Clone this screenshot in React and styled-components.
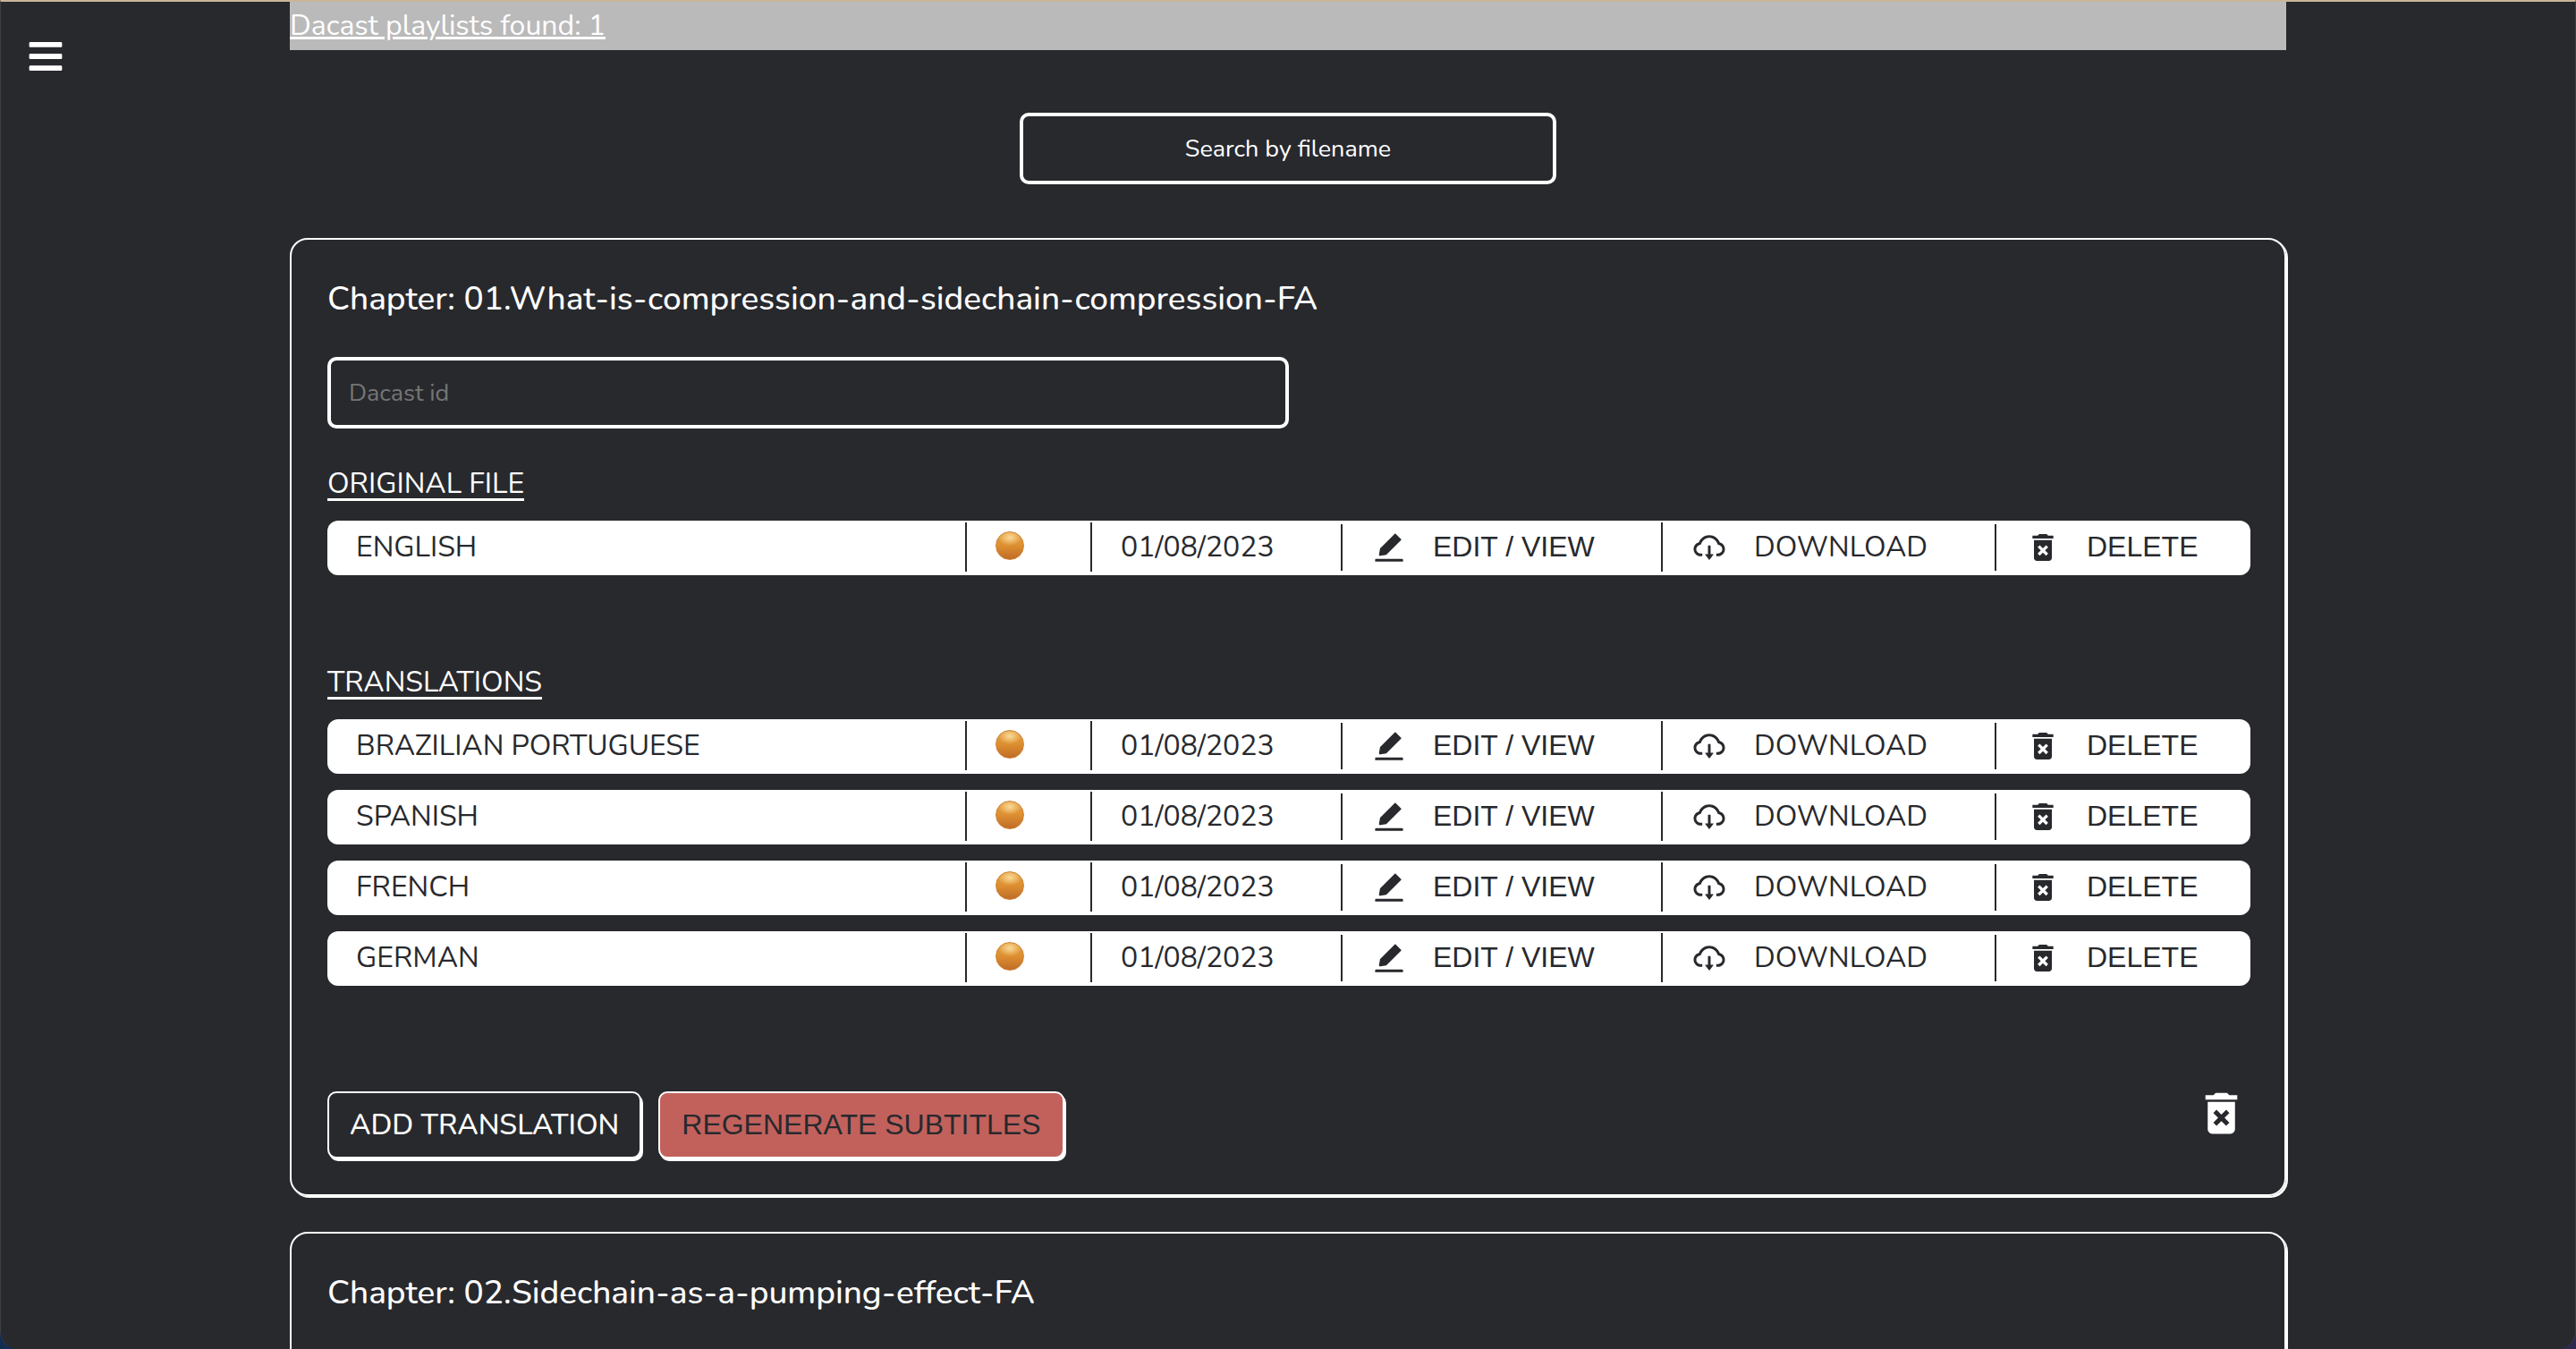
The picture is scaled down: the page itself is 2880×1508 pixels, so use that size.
import React from "react";
import styled, { createGlobalStyle } from "styled-components";
import { FaBars } from "react-icons/fa";
import { AiFillEdit, AiOutlineCloudDownload } from "react-icons/ai";
import { MdDeleteForever } from "react-icons/md";

const ink = "#28292d";
const bodyFont = `Nunito, Lato, "Open Sans", sans-serif`;
const buttonFont = `Arial, "Liberation Sans", sans-serif`;

const GlobalStyle = createGlobalStyle`
  *, *::before, *::after { box-sizing: border-box; }
  body {
    margin: 0;
    background: linear-gradient(90deg, #122d52, #2d2a50);
    color: #fff;
    font-family: ${bodyFont};
    font-size: 32px;
    line-height: 32px;
  }
  button, input { font: inherit; color: inherit; }
  button { cursor: pointer; }
`;

const Window = styled.div`
  position: relative;
  height: 100vh;
  overflow: hidden auto;
  scrollbar-width: none;
  background: ${ink};
  border-top: 2px solid #c9b598;
  border-left: 1px solid #3e3f43;
  border-right: 1px solid #3e3f43;
  border-radius: 0 0 20px 20px;
`;

const MenuButton = styled.button`
  position: absolute;
  top: 40px;
  left: 29px;
  display: flex;
  padding: 0;
  border: 0;
  background: none;
  font-size: 42px;
`;

const Page = styled.main`
  display: flex;
  flex-direction: column;
  width: 2232px;
  max-width: 78%;
  margin: 0 auto;
`;

const Banner = styled.div`
  padding: 11px 0;
  background: #bababa;
`;

const BannerLink = styled.a`
  color: #fff;
  text-decoration: underline 3px;
  text-underline-offset: 2px;
`;

const TextField = styled.input`
  height: 80px;
  padding: 0 20px;
  border: 4px solid #fff;
  border-radius: 10px;
  background: transparent;
  font-size: 27px;
  outline: none;
  &::placeholder { color: #757575; opacity: 1; }
`;

const SearchField = styled(TextField)`
  width: 600px;
  margin: 70px auto 60px;
  text-align: center;
  &::placeholder { color: #fff; }
`;

const DacastField = styled(TextField)`
  width: 50%;
  margin-top: 39px;
`;

const CardList = styled.div`
  display: flex;
  flex-direction: column;
  gap: 40px;
`;

const Card = styled.article`
  display: flex;
  flex-direction: column;
  padding: 40px 38px 40px 40px;
  border: 2px solid #fff;
  border-radius: 20px;
  box-shadow: 2px 2px 0 #fff;
`;

const CardTitle = styled.h2`
  margin: 0;
  font-size: 37px;
  line-height: 52px;
  font-weight: 500;
`;

const GroupTitle = styled.h3`
  align-self: flex-start;
  margin: ${(p) => p.$space}px 0 22px;
  border-bottom: 3px solid #fff;
  font-size: inherit;
  font-weight: 400;
`;

const FileTable = styled.table`
  display: block;
  color: ${ink};
`;

const FileRows = styled.tbody`
  display: grid;
  gap: 18px;
`;

const FileRow = styled.tr`
  display: grid;
  grid-template-columns: 713fr 140fr 280fr 358fr 373fr 286fr;
  height: 61px;
  border-radius: 12px;
  background: #fff;
`;

const Cell = styled.td`
  display: flex;
  align-items: center;
  margin: ${(p) => (p.$inset ? "4px 0 5px" : "2px 0 4px")};
  padding: 0 0 0 32px;
  border-left: 2px solid ${ink};
  &:first-child { border-left: 0; }
`;

const RowButton = styled.button`
  display: flex;
  align-items: center;
  gap: 29px;
  padding: 0;
  border: 0;
  background: none;
  font-family: ${buttonFont};
  svg { font-size: 40px; flex: none; }
  span { padding-bottom: 2px; }
`;

const RowLink = styled.a`
  display: flex;
  align-items: center;
  gap: 30px;
  color: inherit;
  text-decoration: none;
  svg { font-size: 40px; flex: none; }
`;

const StatusDot = styled.span`
  width: 32px;
  height: 32px;
  margin-bottom: 4px;
  border: 1px solid #cf8232;
  border-radius: 50%;
  background:
    radial-gradient(ellipse 13px 9px at 50% 20%, rgba(255, 228, 165, 0.85), rgba(255, 220, 140, 0) 100%),
    linear-gradient(#e3a347, #dd8f30 50%, #c06c28);
`;

const CardFooter = styled.div`
  display: flex;
  align-items: flex-end;
  gap: 19px;
  height: 81px;
  margin-top: 112px;
  padding-right: 2px;
`;

const ActionButton = styled.button`
  height: 75px;
  padding: ${(p) => (p.$danger ? "0 24px 2px" : "0 23px")};
  border: 2px solid #fff;
  border-radius: 10px;
  box-shadow: 2px 3px 0 #fff;
  background: ${(p) => (p.$danger ? "#c2615c" : ink)};
  color: ${(p) => (p.$danger ? ink : "#fff")};
  font-family: ${(p) => (p.$danger ? buttonFont : bodyFont)};
  font-weight: ${(p) => (p.$danger ? 400 : 500)};
`;

const TrashButton = styled.button`
  display: flex;
  align-self: flex-start;
  margin-left: auto;
  padding: 0;
  border: 0;
  background: none;
  font-size: 61px;
`;

function Files({ languages, label }) {
  return (
    <FileTable aria-label={label}>
      <FileRows>
        {languages.map((language) => (
          <FileRow key={language}>
            <Cell>{language}</Cell>
            <Cell><StatusDot role="img" aria-label="Pending" /></Cell>
            <Cell>01/08/2023</Cell>
            <Cell $inset>
              <RowButton type="button"><AiFillEdit /><span>EDIT / VIEW</span></RowButton>
            </Cell>
            <Cell>
              <RowLink href="#download"><AiOutlineCloudDownload />DOWNLOAD</RowLink>
            </Cell>
            <Cell $inset>
              <RowButton type="button"><MdDeleteForever /><span>DELETE</span></RowButton>
            </Cell>
          </FileRow>
        ))}
      </FileRows>
    </FileTable>
  );
}

const chapters = [
  {
    name: "01.What-is-compression-and-sidechain-compression-FA",
    files: {
      original: ["ENGLISH"],
      translations: ["BRAZILIAN PORTUGUESE", "SPANISH", "FRENCH", "GERMAN"],
    },
  },
  { name: "02.Sidechain-as-a-pumping-effect-FA" },
];

function Chapter({ name, files }) {
  return (
    <Card>
      <CardTitle>Chapter: {name}</CardTitle>
      <DacastField aria-label="Dacast id" placeholder="Dacast id" />
      {files && (
        <>
          <GroupTitle $space={46}>ORIGINAL FILE</GroupTitle>
          <Files label="Original file" languages={files.original} />
          <GroupTitle $space={104}>TRANSLATIONS</GroupTitle>
          <Files label="Translations" languages={files.translations} />
          <CardFooter>
            <ActionButton type="button">ADD TRANSLATION</ActionButton>
            <ActionButton type="button" $danger>REGENERATE SUBTITLES</ActionButton>
            <TrashButton type="button" aria-label="Delete chapter"><MdDeleteForever /></TrashButton>
          </CardFooter>
        </>
      )}
    </Card>
  );
}

export default function App() {
  return (
    <Window>
      <GlobalStyle />
      <MenuButton type="button" aria-label="Menu"><FaBars /></MenuButton>
      <Page>
        <Banner>
          <BannerLink href="#playlists">Dacast playlists found: 1</BannerLink>
        </Banner>
        <SearchField aria-label="Search by filename" placeholder="Search by filename" />
        <CardList>
          {chapters.map((chapter) => (
            <Chapter key={chapter.name} {...chapter} />
          ))}
        </CardList>
      </Page>
    </Window>
  );
}
